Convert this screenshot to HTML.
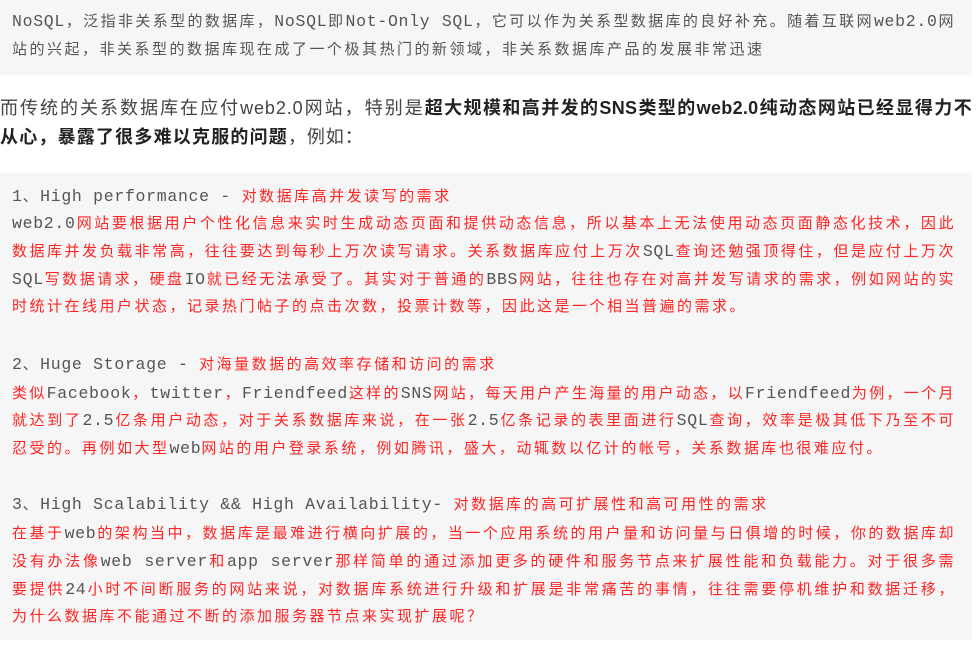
<!DOCTYPE html>
<html><head><meta charset="utf-8"><style>
body{margin:0;width:976px;height:647px;background:#fff;position:relative;overflow:hidden;font-family:"Liberation Mono","Noto Sans CJK SC",monospace;}
.box{position:absolute;left:0;width:972px;background:#f6f6f6;}
.l{position:absolute;left:12px;height:28px;line-height:28px;font-size:15px;letter-spacing:2.5px;white-space:nowrap;color:#555;}
.j{width:943px;letter-spacing:1.5px;text-align:justify;text-align-last:justify;text-justify:inter-character;white-space:normal;overflow:hidden;}
.m,b{font-size:16.5px;letter-spacing:0.7px;font-weight:normal;color:#555;}
.r{color:#ff2424;}
.h{position:absolute;left:0;height:30px;line-height:30px;font-size:18px;letter-spacing:0.9px;white-space:nowrap;color:#444;font-family:"Liberation Sans","Noto Sans CJK SC",sans-serif;}
.h strong{color:#222;letter-spacing:1.2px;}
</style></head><body>
<div class="box" style="top:0;height:75px"></div>
<div class="l j" style="top:8px"><b>NoSQL</b>，泛指非关系型的数据库，<b>NoSQL</b>即<b>Not-Only SQL</b>，它可以作为关系型数据库的良好补充。随着互联网<b>web2.0</b>网</div>
<div class="l" style="top:37px">站的兴起，非关系型的数据库现在成了一个极其热门的新领域，非关系数据库产品的发展非常迅速</div>

<div class="h" style="top:93px;width:972px;text-align:justify;text-align-last:justify;">而传统的关系数据库在应付web2.0网站，特别是<strong style="letter-spacing:0.3px">超大规模和高并发的SNS类型的web2.0纯动态网站已经显得力不</strong></div>
<div class="h" style="top:122px"><strong>从心，暴露了很多难以克服的问题</strong>，例如：</div>

<div class="box" style="top:173px;height:467px"></div>
<div class="l" style="top:183px"><b>1</b>、<b>High performance - </b><span class="r">对数据库高并发读写的需求</span></div>
<div class="l j r" style="top:210px"><b>web2.0</b>网站要根据用户个性化信息来实时生成动态页面和提供动态信息，所以基本上无法使用动态页面静态化技术，因此</div>
<div class="l j r" style="top:238px">数据库并发负载非常高，往往要达到每秒上万次读写请求。关系数据库应付上万次<b>SQL</b>查询还勉强顶得住，但是应付上万次</div>
<div class="l j r" style="top:266px"><b>SQL</b>写数据请求，硬盘<b>IO</b>就已经无法承受了。其实对于普通的<b>BBS</b>网站，往往也存在对高并发写请求的需求，例如网站的实</div>
<div class="l r" style="top:294px">时统计在线用户状态，记录热门帖子的点击次数，投票计数等，因此这是一个相当普遍的需求。</div>

<div class="l" style="top:351px"><b>2</b>、<b>Huge Storage - </b><span class="r">对海量数据的高效率存储和访问的需求</span></div>
<div class="l j r" style="top:380px">类似<b>Facebook</b>，<b>twitter</b>，<b>Friendfeed</b>这样的<b>SNS</b>网站，每天用户产生海量的用户动态，以<b>Friendfeed</b>为例，一个月</div>
<div class="l j r" style="top:407px">就达到了<b>2.5</b>亿条用户动态，对于关系数据库来说，在一张<b>2.5</b>亿条记录的表里面进行<b>SQL</b>查询，效率是极其低下乃至不可</div>
<div class="l r" style="top:435px">忍受的。再例如大型<b>web</b>网站的用户登录系统，例如腾讯，盛大，动辄数以亿计的帐号，关系数据库也很难应付。</div>

<div class="l" style="top:491px"><b>3</b>、<b>High Scalability &amp;&amp; High Availability- </b><span class="r">对数据库的高可扩展性和高可用性的需求</span></div>
<div class="l j r" style="top:520px">在基于<b>web</b>的架构当中，数据库是最难进行横向扩展的，当一个应用系统的用户量和访问量与日俱增的时候，你的数据库却</div>
<div class="l j r" style="top:548px">没有办法像<b>web server</b>和<b>app server</b>那样简单的通过添加更多的硬件和服务节点来扩展性能和负载能力。对于很多需</div>
<div class="l j r" style="top:576px">要提供<b>24</b>小时不间断服务的网站来说，对数据库系统进行升级和扩展是非常痛苦的事情，往往需要停机维护和数据迁移，</div>
<div class="l r" style="top:604px">为什么数据库不能通过不断的添加服务器节点来实现扩展呢？</div>
</body></html>
